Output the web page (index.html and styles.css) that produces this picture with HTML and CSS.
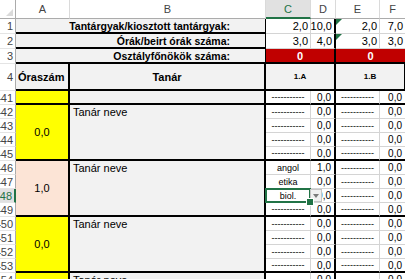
FILE: index.html
```html
<!DOCTYPE html>
<html lang="hu">
<head>
    <meta charset="UTF-8">
    <title>Tantárgyfelosztás</title>
    <link rel="stylesheet" href="styles.css">
</head>
<body>
    <div class="sheet">
        <!-- column headers -->
        <div class="corner"><span class="corner-mark"></span></div>
        <div class="col-head">A</div>
        <div class="col-head">B</div>
        <div class="col-head active">C</div>
        <div class="col-head">D</div>
        <div class="col-head">E</div>
        <div class="col-head">F</div>

        <!-- summary rows -->
        <div class="row-head">1</div>
        <div class="label">Tantárgyak/kiosztott tantárgyak:</div>
        <div class="num">2,0</div>
        <div class="num edge">10,0</div>
        <div class="num flag">2,0</div>
        <div class="num">7,0</div>

        <div class="row-head">2</div>
        <div class="label">Órák/beirt órák száma:</div>
        <div class="num">3,0</div>
        <div class="num edge">4,0</div>
        <div class="num flag">3,0</div>
        <div class="num">3,0</div>

        <div class="row-head">3</div>
        <div class="label">Osztályfőnökök száma:</div>
        <div class="red edge">0</div>
        <div class="red">0</div>

        <div class="row-head">4</div>
        <div class="hdr hdr-a">Óraszám</div>
        <div class="hdr hdr-b">Tanár</div>
        <div class="hdr hdr-cls">1.A</div>
        <div class="hdr hdr-cls">1.B</div>

        <!-- teacher blocks -->
        <div class="row-head">441</div>
        <div class="hours tail"></div>
        <div class="teacher tail"></div>
        <div class="subj last">-----------</div>
        <div class="val edge last">0,0</div>
        <div class="subj last">-----------</div>
        <div class="val last">0,0</div>

        <div class="row-head">442</div>
        <div class="hours">0,0</div>
        <div class="teacher">Tanár neve</div>
        <div class="subj">-----------</div>
        <div class="val edge">0,0</div>
        <div class="subj">-----------</div>
        <div class="val">0,0</div>

        <div class="row-head">443</div>
        <div class="subj">-----------</div>
        <div class="val edge">0,0</div>
        <div class="subj">-----------</div>
        <div class="val">0,0</div>

        <div class="row-head">444</div>
        <div class="subj">-----------</div>
        <div class="val edge">0,0</div>
        <div class="subj">-----------</div>
        <div class="val">0,0</div>

        <div class="row-head">445</div>
        <div class="subj last">-----------</div>
        <div class="val edge last">0,0</div>
        <div class="subj last">-----------</div>
        <div class="val last">0,0</div>

        <div class="row-head">446</div>
        <div class="hours peach">1,0</div>
        <div class="teacher">Tanár neve</div>
        <div class="subj">angol</div>
        <div class="val edge">1,0</div>
        <div class="subj">-----------</div>
        <div class="val">0,0</div>

        <div class="row-head">447</div>
        <div class="subj">etika</div>
        <div class="val edge">0,0</div>
        <div class="subj">-----------</div>
        <div class="val">0,0</div>

        <div class="row-head current">448</div>
        <div class="subj selected">biol.<span class="dropdown"><svg width="6" height="4" viewBox="0 0 6 4"><path d="M0 0h6L3 4z" fill="#7a7a7a"/></svg></span></div>
        <div class="val edge">0,0</div>
        <div class="subj">-----------</div>
        <div class="val">0,0</div>

        <div class="row-head">449</div>
        <div class="subj last">-----------</div>
        <div class="val edge last">0,0</div>
        <div class="subj last">-----------</div>
        <div class="val last">0,0</div>

        <div class="row-head">450</div>
        <div class="hours">0,0</div>
        <div class="teacher">Tanár neve</div>
        <div class="subj">-----------</div>
        <div class="val edge">0,0</div>
        <div class="subj">-----------</div>
        <div class="val">0,0</div>

        <div class="row-head">451</div>
        <div class="subj">-----------</div>
        <div class="val edge">0,0</div>
        <div class="subj">-----------</div>
        <div class="val">0,0</div>

        <div class="row-head">452</div>
        <div class="subj">-----------</div>
        <div class="val edge">0,0</div>
        <div class="subj">-----------</div>
        <div class="val">0,0</div>

        <div class="row-head">453</div>
        <div class="subj last">-----------</div>
        <div class="val edge last">0,0</div>
        <div class="subj last">-----------</div>
        <div class="val last">0,0</div>

        <div class="row-head">454</div>
        <div class="hours"></div>
        <div class="teacher">Tanár neve</div>
        <div class="subj">-----------</div>
        <div class="val edge">0,0</div>
        <div class="subj">-----------</div>
        <div class="val">0,0</div>
    </div>
</body>
</html>
```

FILE: styles.css
```css
* {
    margin: 0;
    padding: 0;
    box-sizing: border-box;
}

body {
    font-family: "Liberation Sans", Arial, sans-serif;
    background: #fff;
    overflow: hidden;
}

.sheet {
    display: grid;
    grid-template-columns: 16px 54px 196px 45px 25px 44px 26px;
    grid-template-rows: 19px 15px 15px 15px 27px;
    grid-auto-rows: 14px;
    width: 406px;
}

.sheet > div {
    display: flex;
    align-items: center;
    overflow: hidden;
    white-space: nowrap;
    color: #000;
    border-right: 1px solid #d4d4d4;
    border-bottom: 1px solid #d4d4d4;
}

/* Headers */
.corner {
    justify-content: flex-end;
    align-items: flex-end !important;
    padding: 0 2px 2px 0;
    border-right: 1px solid #ababab !important;
    border-bottom: 1px solid #ababab !important;
}

.corner-mark {
    width: 0;
    height: 0;
    border-left: 7px solid transparent;
    border-bottom: 7px solid #dadada;
}

.col-head {
    justify-content: center;
    font-size: 11px;
    color: #444 !important;
    border-right: 1px solid #dadada !important;
    border-bottom: 1px solid #ababab !important;
}

.col-head.active {
    background: #e1e1e1;
    color: #217346 !important;
    border-bottom: 2px solid #217346 !important;
}

.row-head {
    justify-content: flex-end;
    padding-right: 2px;
    font-size: 11px;
    color: #444 !important;
    border-right: 1px solid #ababab !important;
    border-bottom: 1px solid #e4e4e4 !important;
}

.row-head.current {
    background: #e1e1e1;
    color: #217346 !important;
    border-right: 2px solid #217346 !important;
}

/* Summary block */
.label {
    grid-column: span 2;
    justify-content: flex-end;
    padding-right: 35px;
    font-size: 10.5px;
    font-weight: bold;
    background: #f2f2f2;
    border-right: 1px solid #000 !important;
    border-bottom: 2px solid #000 !important;
}

.num {
    justify-content: flex-end;
    padding-right: 2px;
    font-size: 11px;
}

.flag {
    position: relative;
    overflow: visible !important;
}

.flag::before {
    content: '';
    position: absolute;
    left: 0;
    top: 0;
    border-top: 6px solid #217346;
    border-right: 6px solid transparent;
}

.red {
    grid-column: span 2;
    justify-content: center;
    background: #c00000;
    color: #fff !important;
    font-size: 11px;
    font-weight: bold;
    border-bottom: 2px solid #000 !important;
}

.hdr {
    background: #f2f2f2;
    font-size: 11px;
    font-weight: bold;
    border-right: 2px solid #000 !important;
    border-bottom: 2px solid #000 !important;
}

.hdr-a {
    padding-left: 2px;
}

.hdr-b {
    justify-content: center;
}

.hdr-cls {
    grid-column: span 2;
    justify-content: center;
    font-size: 8px;
}

/* Teacher blocks */
.hours {
    grid-row: span 4;
    justify-content: center;
    background: #ffff00;
    font-size: 11px;
    border-right: 2px solid #000 !important;
    border-bottom: 2px solid #000 !important;
}

.hours.peach {
    background: #fce4d6;
}

.teacher {
    grid-row: span 4;
    align-items: flex-start !important;
    padding: 1px 3px 0;
    line-height: 13px;
    font-size: 11px;
    background: #f2f2f2;
    border-right: 2px solid #000 !important;
    border-bottom: 2px solid #000 !important;
}

.hours.tail,
.teacher.tail {
    grid-row: span 1;
}

.subj {
    justify-content: center;
    font-size: 9px;
}

.val {
    justify-content: flex-end;
    padding-right: 3px;
    font-size: 10px;
}

.edge {
    border-right: 2px solid #000 !important;
}

.last {
    border-bottom: 2px solid #000 !important;
}

/* Active cell */
.selected {
    position: relative;
    overflow: visible !important;
}

.selected::before {
    content: '';
    position: absolute;
    left: -1px;
    top: -1px;
    right: -1px;
    bottom: -1px;
    border: 2px solid #217346;
}

.selected::after {
    content: '';
    position: absolute;
    right: -4px;
    bottom: -4px;
    width: 6px;
    height: 6px;
    background: #217346;
    border: 1px solid #fff;
    z-index: 2;
}

.dropdown {
    position: absolute;
    left: 100%;
    top: 0;
    width: 12px;
    height: 13px;
    display: flex;
    align-items: center;
    justify-content: center;
    background: #f0f0f0;
    border: 1px solid #c6c6c6;
    z-index: 1;
}
```
